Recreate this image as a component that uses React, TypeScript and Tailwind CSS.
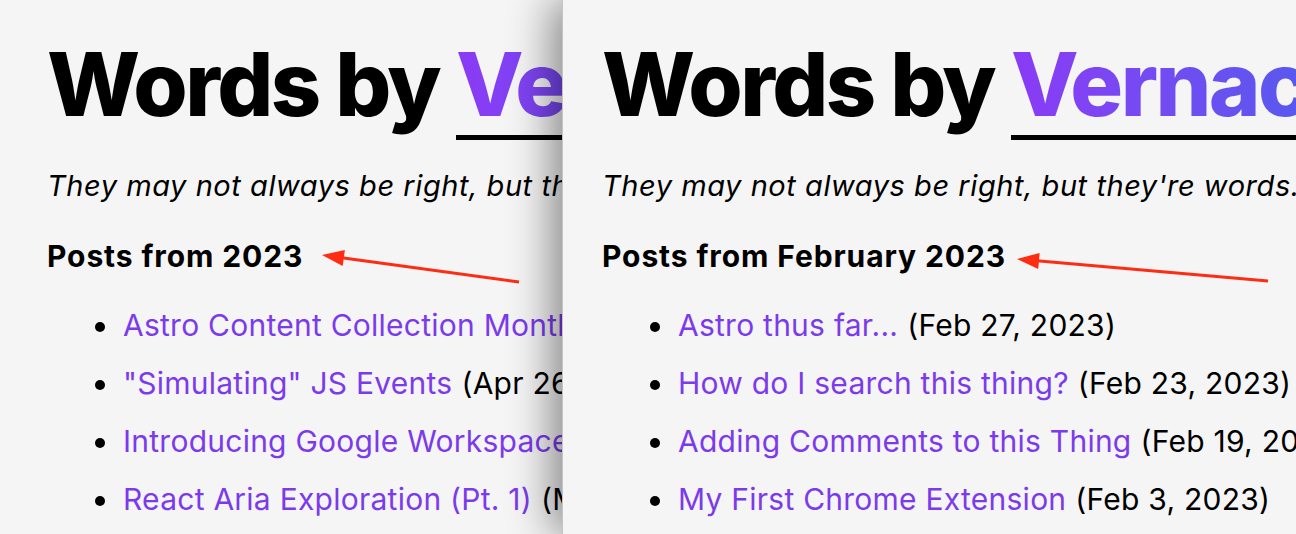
const leftPosts = [
  { title: "Astro Content Collection Monthly Archives", date: "May 2, 2023" },
  { title: "\"Simulating\" JS Events", date: "Apr 26, 2023" },
  { title: "Introducing Google Workspace Add-ons", date: "Apr 10, 2023" },
  { title: "React Aria Exploration (Pt. 1)", date: "Mar 21, 2023" },
]

const rightPosts = [
  { title: "Astro thus far...", date: "Feb 27, 2023" },
  { title: "How do I search this thing?", date: "Feb 23, 2023" },
  { title: "Adding Comments to this Thing", date: "Feb 19, 2023" },
  { title: "My First Chrome Extension", date: "Feb 3, 2023" },
]

function Arrow({ from, to }: { from: [number, number]; to: [number, number] }) {
  const dx = to[0] - from[0]
  const dy = to[1] - from[1]
  const len = Math.hypot(dx, dy)
  const ux = dx / len
  const uy = dy / len
  const head = 22
  const half = 8
  const bx = to[0] - ux * head
  const by = to[1] - uy * head
  const pts = [
    [to[0], to[1]],
    [bx - uy * half, by + ux * half],
    [bx + uy * half, by - ux * half],
  ]
  return (
    <g>
      <line x1={from[0]} y1={from[1]} x2={bx + ux * 2} y2={by + uy * 2} stroke="#fe2c12" strokeWidth={3} />
      <polygon points={pts.map((p) => p.join(",")).join(" ")} fill="#fe2c12" />
    </g>
  )
}

function Page({
  heading,
  posts,
  arrowFrom,
  arrowTo,
  padLeft,
}: {
  heading: string
  posts: { title: string; date: string }[]
  arrowFrom: [number, number]
  arrowTo: [number, number]
  padLeft: string
}) {
  return (
    <div className={`relative h-full pt-[40px] ${padLeft} whitespace-nowrap`}>
      <h1 className="text-[88px] leading-[88px] font-extrabold tracking-[-0.029em] text-black">
        Words by{" "}
        <span className="inline-block pb-[7px] border-b-[5px] border-black bg-gradient-to-r from-[#8a3af5] to-[#2563eb] bg-clip-text text-transparent">
          Vernacular
        </span>
      </h1>
      <p className="mt-[26px] text-[29px] leading-[40px] italic tracking-[0.55px] text-black">
        They may not always be right, but they're words.
      </p>
      <h2 className="mt-[32px] text-[30px] leading-[36px] font-bold tracking-[0.9px] text-black">{heading}</h2>
      <ul className="mt-[22px] pl-[48px]">
        {posts.map((p) => (
          <li key={p.title} className="flex items-center text-[30px] leading-[58px] tracking-[0.25px] text-black">
            <span className="mt-[4px] mr-[18px] h-[10px] w-[10px] shrink-0 rounded-full bg-black" />
            <a href="#" className="text-[#7c3aed]">
              {p.title}
            </a>
            <span className="ml-[9px]">({p.date})</span>
          </li>
        ))}
      </ul>
      <svg className="pointer-events-none absolute inset-0 h-full w-full">
        <Arrow from={arrowFrom} to={arrowTo} />
      </svg>
    </div>
  )
}

export default function App() {
  return (
    <div className="flex h-[534px] w-[1296px] overflow-hidden bg-[#f5f5f5] font-['Inter',sans-serif]">
      <div className="relative w-[562px] shrink-0 overflow-hidden">
        <Page heading="Posts from 2023" posts={leftPosts} arrowFrom={[519, 282]} arrowTo={[322, 255]} padLeft="pl-[47px]" />
      </div>
      <div className="relative z-10 flex-1 overflow-hidden border-l border-black/20 bg-[#f5f5f5] shadow-[-10px_0_40px_rgba(0,0,0,0.45)]">
        <Page heading="Posts from February 2023" posts={rightPosts} arrowFrom={[705, 281]} arrowTo={[454, 259]} padLeft="pl-[39px]" />
      </div>
    </div>
  )
}
